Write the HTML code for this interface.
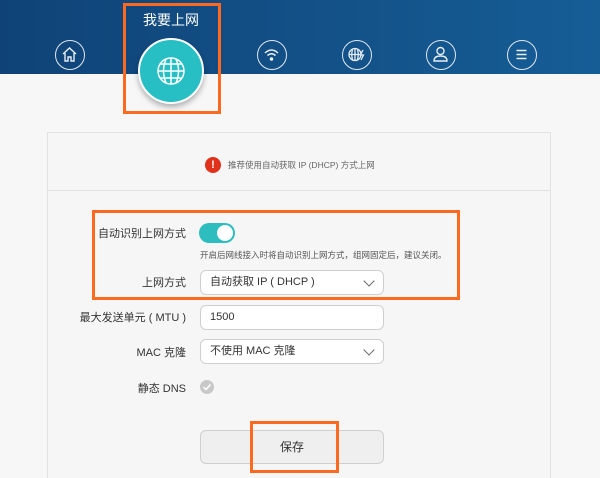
<!DOCTYPE html><html><head><meta charset="utf-8"><style>
*{margin:0;padding:0;box-sizing:border-box}
html{overflow:hidden;height:478px}
body{width:600px;height:478px;background:#f7f7f7;position:relative;overflow:hidden;font-family:"Liberation Sans","Noto Sans CJK SC",sans-serif;color:#333}
.hdr{position:absolute;left:0;top:0;width:600px;height:74px;background:linear-gradient(90deg,#0f4377,#165d96)}
.ic{position:absolute;width:30px;height:30px;border:1.5px solid #dfe8f0;border-radius:50%;top:40px}
.ic svg{position:absolute;left:0;top:0}
.big{position:absolute;left:138px;top:38px;width:66px;height:66px;border-radius:50%;background:#27bfc4;border:2px solid #fff;box-shadow:0 3px 6px rgba(0,0,0,.3)}
.ob{position:absolute;border:3px solid #fb6a20}
.panel{position:absolute;left:47px;top:132px;width:504px;height:346px;border:1px solid #e2e2e2;border-bottom:none;background:#f6f6f6}
.lab{position:absolute;right:414px;font-size:11px;color:#333;text-align:right;white-space:nowrap}
.inp{position:absolute;left:200px;width:184px;height:25px;border:1px solid #cfcfcf;border-radius:6px;background:#fff;font-size:11px;padding-left:9px;line-height:23px}
.chev{position:absolute;right:10px;top:6px;width:8px;height:8px;border-right:1.3px solid #666;border-bottom:1.3px solid #666;transform:rotate(45deg)}
</style></head><body>
<div class="hdr"></div>
<div style="position:absolute;left:143px;top:10px;color:#fff;font-size:14px">我要上网</div>
<div class="ic" style="left:55px"><svg width="27" height="27" viewBox="0 0 27 27" fill="none" stroke="#e8eef4" stroke-width="1.4"><path d="M7 13 L13.5 7 L20 13 M9 12 V20 H12 V16 H15 V20 H18 V12"/></svg></div>
<div class="ic" style="left:257px"><svg width="27" height="27" viewBox="0 0 27 27" fill="none" stroke="#e8eef4" stroke-width="1.5"><path d="M7 12 Q13.5 6 20 12 M9.5 14.5 Q13.5 11 17.5 14.5"/><circle cx="13.5" cy="18" r="1" fill="#e8eef4"/></svg></div>
<div class="ic" style="left:342px"><svg width="27" height="27" viewBox="0 0 27 27" fill="none" stroke="#e8eef4" stroke-width="1.3"><circle cx="12" cy="13.5" r="6"/><path d="M12 7.5 V19.5 M6 13.5 H18 M9.5 8.5 Q8 13.5 9.5 18.5 M14.5 8.5 Q16 13.5 14.5 18.5 M20 9 L17.5 14 H20.5 L18 19"/></svg></div>
<div class="ic" style="left:426px"><svg width="27" height="27" viewBox="0 0 27 27" fill="none" stroke="#e8eef4" stroke-width="1.4"><circle cx="13.5" cy="10" r="3.5"/><path d="M7 20 Q7 15 13.5 15 Q20 15 20 20 Z"/></svg></div>
<div class="ic" style="left:507px"><svg width="27" height="27" viewBox="0 0 27 27" fill="none" stroke="#e8eef4" stroke-width="1.4"><path d="M8.5 9.5 H18.5 M8.5 13.5 H18.5 M8.5 17.5 H18.5"/></svg></div>
<div class="big"><svg width="62" height="62" viewBox="0 0 62 62" fill="none" stroke="#fff" stroke-width="1.5"><circle cx="31" cy="31" r="13"/><path d="M31 18 V44 M18 31 H44 M20 24 H42 M20 38 H42 M26 19 Q21 31 26 43 M36 19 Q41 31 36 43"/></svg></div>
<div class="ob" style="left:123px;top:3px;width:98px;height:111px"></div>
<div class="panel"></div>
<div style="position:absolute;left:47px;top:190px;width:504px;border-top:1px solid #e2e2e2"></div>
<div style="position:absolute;left:205px;top:157px;width:16px;height:16px;border-radius:50%;background:#e0311a;color:#fff;font-size:11px;font-weight:bold;text-align:center;line-height:16px">!</div>
<div style="position:absolute;left:228px;top:159px;font-size:8.5px;color:#666">推荐使用自动获取 IP (DHCP) 方式上网</div>
<div class="lab" style="top:225px">自动识别上网方式</div>
<div style="position:absolute;left:199px;top:223px;width:36px;height:20px;border-radius:10px;background:#2dbdbf"><div style="position:absolute;right:2px;top:2px;width:16px;height:16px;border-radius:50%;background:#fff"></div></div>
<div style="position:absolute;left:200px;top:249px;font-size:8.5px;color:#555">开启后网线接入时将自动识别上网方式，组网固定后，建议关闭。</div>
<div class="lab" style="top:274px">上网方式</div>
<div class="inp" style="top:270px">自动获取 IP ( DHCP )<div class="chev"></div></div>
<div class="ob" style="left:92px;top:210px;width:368px;height:90px"></div>
<div class="lab" style="top:309px">最大发送单元 ( MTU )</div>
<div class="inp" style="top:305px">1500</div>
<div class="lab" style="top:344px">MAC 克隆</div>
<div class="inp" style="top:339px">不使用 MAC 克隆<div class="chev"></div></div>
<div class="lab" style="top:380px">静态 DNS</div>
<div style="position:absolute;left:200px;top:380px;width:14px;height:14px;border-radius:50%;background:#c8c8c8"><svg width="14" height="14"><path d="M3.5 7 L6 9.5 L10.5 4.5" stroke="#fff" stroke-width="1.5" fill="none"/></svg></div>
<div style="position:absolute;left:200px;top:430px;width:184px;height:34px;border:1px solid #cfcfcf;border-radius:6px;background:#efefef;text-align:center;line-height:32px;font-size:12px">保存</div>
<div class="ob" style="left:250px;top:421px;width:89px;height:52px"></div>
</body></html>
